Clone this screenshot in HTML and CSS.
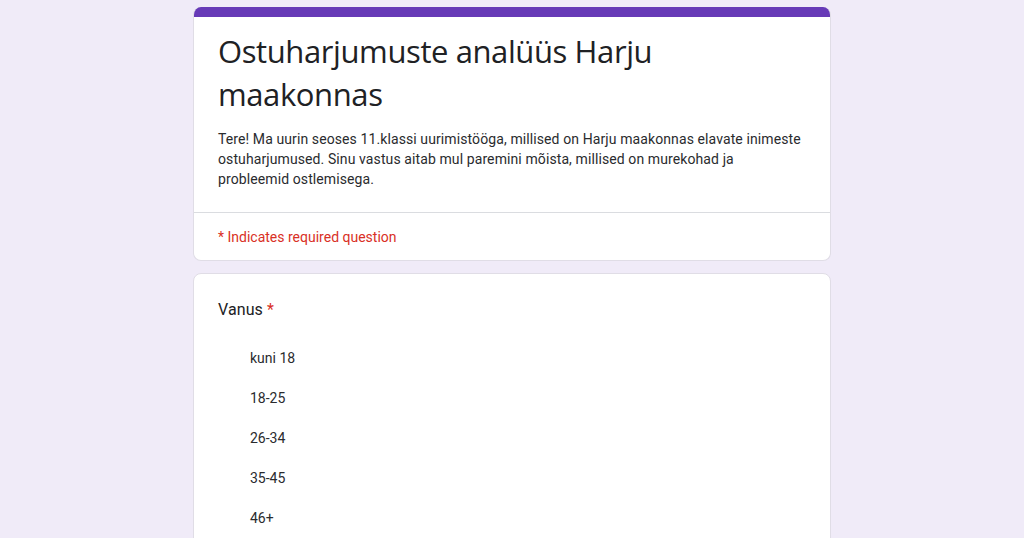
FILE: index.html
```html
<!DOCTYPE html>
<html lang="et">
<head>
<meta charset="utf-8">
<title>Ostuharjumuste analüüs Harju maakonnas</title>
<link rel="stylesheet" href="styles.css">
</head>
<body>
<main class="form">
  <section class="card header-card">
    <div class="accent"></div>
    <div class="header-body">
      <h1 class="title">Ostuharjumuste analüüs Harju maakonnas</h1>
      <p class="desc">Tere! Ma uurin seoses 11.klassi uurimistööga, millised on Harju maakonnas elavate inimeste ostuharjumused. Sinu vastus aitab mul paremini mõista, millised on murekohad ja probleemid ostlemisega.</p>
    </div>
    <div class="required-note">* Indicates required question</div>
  </section>
  <section class="card question-card">
    <div class="q-title">Vanus <span class="star">*</span></div>
    <div class="options">
      <div class="option">kuni 18</div>
      <div class="option">18-25</div>
      <div class="option">26-34</div>
      <div class="option">35-45</div>
      <div class="option">46+</div>
    </div>
  </section>
</main>
</body>
</html>
```
FILE: styles.css
```css
html, body {
  margin: 0;
  padding: 0;
  background: #f0ebf8;
  height: 100%;
  overflow: hidden;
}
body {
  font-family: Roboto, "Liberation Sans", Arial, sans-serif;
  color: #202124;
}
.form {
  width: 638px;
  margin: 0 auto;
  padding-top: 7px;
  display: flex;
  flex-direction: column;
  gap: 12px;
}
.card {
  background: #fff;
  border-radius: 8px;
  border: 1px solid #e0dde6;
  overflow: hidden;
}
.header-card {
  border-top: none;
}
.accent {
  height: 10px;
  background: #673ab7;
}
.header-body {
  padding: 13px 24px 23px 24px;
  border-bottom: 1px solid #dadce0;
}
.title {
  margin: 0;
  font-family: "Open Sans", Roboto, sans-serif;
  font-weight: 400;
  font-size: 31px;
  line-height: 43px;
  color: #202124;
  max-width: 560px;
  letter-spacing: -0.4px;
}
.desc {
  margin: 13px 0 0 0;
  font-size: 14px;
  line-height: 20px;
  color: #2a2b2e;
  letter-spacing: 0.1px;
}
.required-note {
  height: 47px;
  display: flex;
  align-items: center;
  padding: 0 24px;
  font-size: 14px;
  color: #d93025;
}
.question-card {
  padding: 24px;
  height: 260px;
}
.q-title {
  font-size: 16px;
  line-height: 24px;
  letter-spacing: 0.1px;
  color: #202124;
}
.star {
  color: #d93025;
}
.options {
  margin-top: 16px;
  display: flex;
  flex-direction: column;
}
.option {
  height: 40px;
  display: flex;
  align-items: center;
  padding-left: 32px;
  font-size: 14px;
  color: #2a2b2e;
}
```
